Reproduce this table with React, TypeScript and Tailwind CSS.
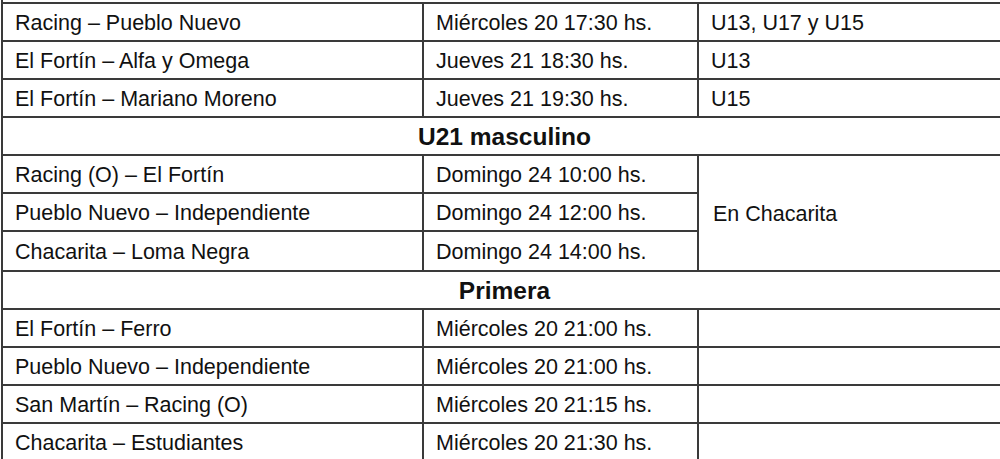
import React from "react";

type Row = [string, string, string?];

const juveniles: Row[] = [
  ["Racing – Pueblo Nuevo", "Miércoles 20 17:30 hs.", "U13, U17 y U15"],
  ["El Fortín – Alfa y Omega", "Jueves 21 18:30 hs.", "U13"],
  ["El Fortín – Mariano Moreno", "Jueves 21 19:30 hs.", "U15"],
];

const u21: Row[] = [
  ["Racing (O) – El Fortín", "Domingo 24 10:00 hs."],
  ["Pueblo Nuevo – Independiente", "Domingo 24 12:00 hs."],
  ["Chacarita – Loma Negra", "Domingo 24 14:00 hs."],
];

const primera: Row[] = [
  ["El Fortín – Ferro", "Miércoles 20 21:00 hs.", ""],
  ["Pueblo Nuevo – Independiente", "Miércoles 20 21:00 hs.", ""],
  ["San Martín – Racing (O)", "Miércoles 20 21:15 hs.", ""],
  ["Chacarita – Estudiantes", "Miércoles 20 21:30 hs.", ""],
];

function Cell({ children, last }: { children?: React.ReactNode; last?: boolean }) {
  return (
    <div
      className={
        "flex items-center pl-[12px] pt-[2px] whitespace-nowrap " +
        (last ? "" : "border-r-2 border-[#3a3a3a]")
      }
    >
      {children}
    </div>
  );
}

function TableRow({ r }: { r: Row }) {
  return (
    <div className="grid grid-cols-[421px_275px_1fr] h-[38px] border-b-2 border-[#3a3a3a]">
      <Cell>{r[0]}</Cell>
      <Cell>{r[1]}</Cell>
      <Cell last>{r[2]}</Cell>
    </div>
  );
}

function Header({ title }: { title: string }) {
  return (
    <div className="h-[38px] pt-[2px] border-b-2 border-[#3a3a3a] flex items-center justify-center font-bold text-[24.5px]">
      {title}
    </div>
  );
}

export default function App() {
  return (
    <div className="w-[1000px] h-[459px] overflow-hidden bg-white text-[#111] font-['Liberation_Sans',Arial,sans-serif] text-[21.5px]">
      <div className="w-[1005px] ml-[1px] border-l-2 border-[#3a3a3a]">
        <div className="h-[2px]" />
        <div className="border-t-2 border-[#3a3a3a]">
          {juveniles.map((r, i) => (
            <TableRow key={"j" + i} r={r} />
          ))}
          <Header title="U21 masculino" />
          <div className="grid grid-cols-[421px_275px_1fr] grid-rows-[repeat(3,38px)] border-b-2 border-[#3a3a3a]">
            {u21.map((r, i) => (
              <React.Fragment key={"u" + i}>
                <div
                  className={
                    "flex items-center pl-[12px] pt-[2px] border-r-2 border-[#3a3a3a] whitespace-nowrap " +
                    (i < 2 ? "border-b-2" : "")
                  }
                  style={{ gridRow: i + 1, gridColumn: 1 }}
                >
                  {r[0]}
                </div>
                <div
                  className={
                    "flex items-center pl-[12px] pt-[2px] border-r-2 border-[#3a3a3a] whitespace-nowrap " +
                    (i < 2 ? "border-b-2" : "")
                  }
                  style={{ gridRow: i + 1, gridColumn: 2 }}
                >
                  {r[1]}
                </div>
              </React.Fragment>
            ))}
            <div className="col-start-3 row-start-1 row-span-3 flex items-center pl-[14px] pt-[2px]">
              En Chacarita
            </div>
          </div>
          <Header title="Primera" />
          {primera.map((r, i) => (
            <TableRow key={"p" + i} r={r} />
          ))}
        </div>
      </div>
    </div>
  );
}
